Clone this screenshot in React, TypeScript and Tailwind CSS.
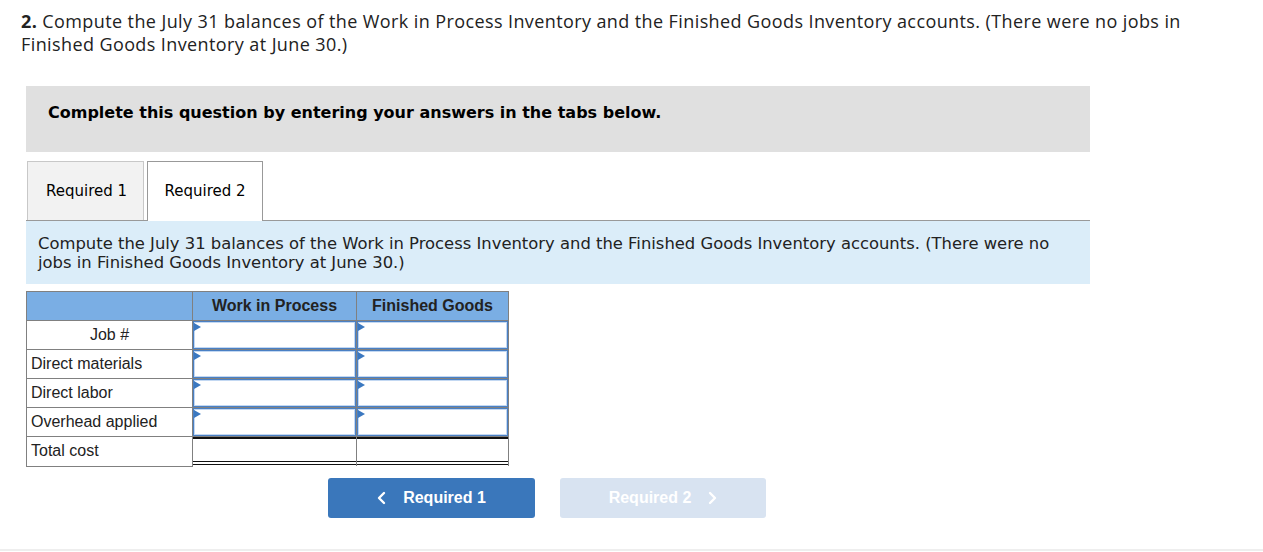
import React from "react";

const rows = ["Job #", "Direct materials", "Direct labor", "Overhead applied"];

function InputCell() {
  return (
    <td className="p-0 border border-[#808080] h-[29px]">
      <div className="relative h-[28px] border border-[#4a80c4] shadow-[inset_0_0_0_1px_#c3d8f2] bg-white">
        <div className="absolute left-0 top-[1px] w-0 h-0 border-t-[4px] border-b-[4px] border-l-[7px] border-t-transparent border-b-transparent border-l-[#3b78c0]" />
      </div>
    </td>
  );
}

function TotalCell() {
  return (
    <td className="p-0 border-x border-t border-[#808080] h-[29px] align-top">
      <div className="flex flex-col h-[29px]">
        <div className="h-[2px] bg-[#111]" />
        <div className="flex-1" />
        <div className="h-[4px] border-y border-[#111] mb-[1px]" />
      </div>
    </td>
  );
}

export default function App() {
  return (
    <div className="w-[1263px] h-[552px] bg-white flex flex-col overflow-hidden">
      <p
        className="pl-[21px] pt-[10px] text-[18px] leading-[23px] tracking-[0.4px] text-[#222]"
        style={{ fontFamily: "'Open Sans', Lato, sans-serif" }}
      >
        <b>2.</b> Compute the July 31 balances of the Work in Process Inventory and the Finished Goods Inventory accounts. (There were no jobs in
        <br />
        Finished Goods Inventory at June 30.)
      </p>
      <div className="ml-[26px] w-[1064px]">
        <div
          className="mt-[30px] h-[66px] bg-[#e0e0e0] pl-[22px] pt-[17px] font-bold text-[16px] leading-[19px] text-black"
          style={{ fontFamily: "'DejaVu Sans', Verdana, sans-serif" }}
        >
          Complete this question by entering your answers in the tabs below.
        </div>
        <div
          className="mt-[9px] flex items-end h-[60px] border-b border-[#999] text-[15px] text-black"
          style={{ fontFamily: "'DejaVu Sans', Tahoma, sans-serif" }}
        >
          <div className="ml-[1px] w-[117px] h-[59px] bg-[#f2f2f2] border border-b-0 border-[#c8c8c8] flex items-center justify-center pl-[2px]">
            Required 1
          </div>
          <div className="ml-[3px] w-[116px] h-[60px] -mb-px bg-white border border-b-0 border-[#999] flex items-center justify-center">
            Required 2
          </div>
        </div>
        <div
          className="h-[63px] bg-[#dbedf9] pl-[12px] pr-[20px] pt-[13px] text-[16.4px] leading-[19px] text-[#222]"
          style={{ fontFamily: "'DejaVu Sans', Tahoma, sans-serif" }}
        >
          Compute the July 31 balances of the Work in Process Inventory and the Finished Goods Inventory accounts. (There were no jobs in Finished Goods Inventory at June 30.)
        </div>
        <table
          className="mt-[7px] border-collapse text-[16px] text-[#222]"
          style={{ fontFamily: "'Liberation Sans', Arial, sans-serif" }}
        >
          <colgroup>
            <col className="w-[166px]" />
            <col className="w-[164px]" />
            <col className="w-[152px]" />
          </colgroup>
          <thead>
            <tr className="bg-[#7aaee4] h-[29px]">
              <th className="border border-[#808080] p-0"></th>
              <th className="border border-[#808080] p-0 font-bold">Work in Process</th>
              <th className="border border-[#808080] p-0 font-bold">Finished Goods</th>
            </tr>
          </thead>
          <tbody>
            {rows.map((r, i) => (
              <tr key={r} className="h-[29px]">
                <td className={`border border-[#808080] p-0 ${i === 0 ? "text-center" : "pl-[4px] text-left"}`}>{r}</td>
                <InputCell />
                <InputCell />
              </tr>
            ))}
            <tr className="h-[29px]">
              <td className="border border-[#808080] p-0 pl-[4px]">Total cost</td>
              <TotalCell />
              <TotalCell />
            </tr>
          </tbody>
        </table>
        <div
          className="mt-[11px] flex gap-[25px] ml-[302px] text-[16px] font-bold text-white"
          style={{ fontFamily: "'Liberation Sans', Arial, sans-serif" }}
        >
          <div className="w-[207px] h-[40px] rounded-[3px] bg-[#3a77bb] flex items-center justify-center gap-[16px]">
            <svg width="10" height="14" viewBox="0 0 10 14" fill="none" stroke="white" strokeWidth="2.4" strokeLinecap="round" strokeLinejoin="round">
              <path d="M7 2 L2 7 L7 12" />
            </svg>
            <span>Required 1</span>
          </div>
          <div className="w-[206px] h-[40px] rounded-[3px] bg-[#d8e3f1] flex items-center justify-center gap-[16px]">
            <span>Required 2</span>
            <svg width="10" height="14" viewBox="0 0 10 14" fill="none" stroke="white" strokeWidth="2.4" strokeLinecap="round" strokeLinejoin="round">
              <path d="M3 2 L8 7 L3 12" />
            </svg>
          </div>
        </div>
      </div>
      <div className="mt-auto mb-[1px] h-[2px] bg-[#eeeeee]" />
    </div>
  );
}
